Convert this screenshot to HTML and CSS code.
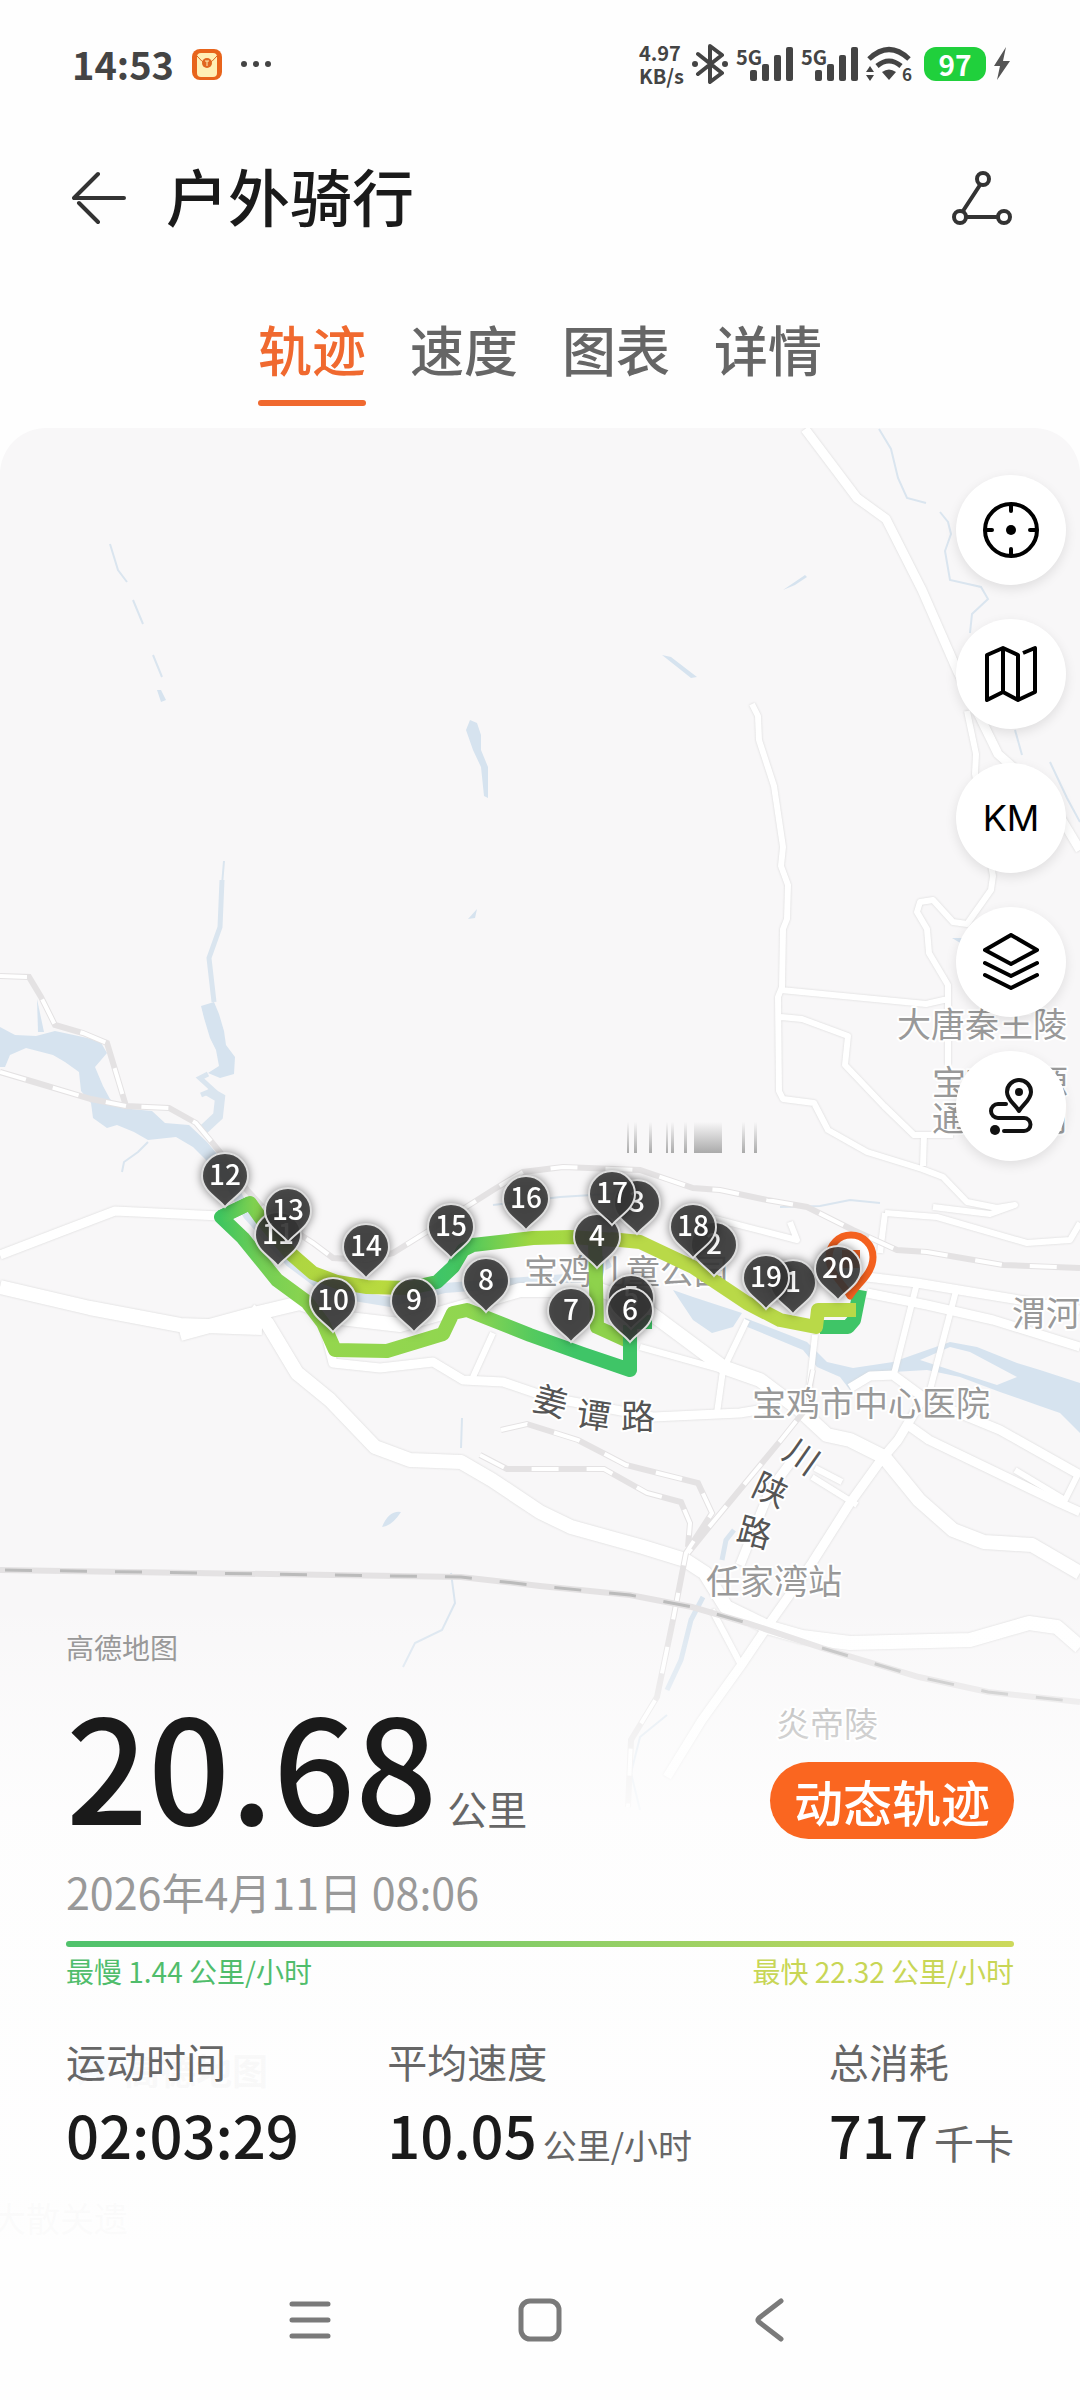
FILE: index.html
```html
<!DOCTYPE html>
<html lang="zh-CN">
<head>
  <meta charset="UTF-8">
  <meta name="viewport" content="width=device-width, initial-scale=1.0">
  <title>户外骑行</title>
  <link rel="stylesheet" href="styles.css">
</head>
<body>
  <div class="status-bar">
    <div class="status-left">
      <span class="clock">14:53</span>
      <svg class="app-icon" width="30" height="31" viewBox="0 0 30 31">
        <rect width="30" height="31" rx="8" fill="#e8641b"/>
        <rect x="5" y="4" width="20" height="24" rx="4" fill="#ffefb5"/>
        <path d="M5 7q10 14 20 0" fill="none" stroke="#d9641e" stroke-width="1"/>
        <circle cx="15" cy="14" r="5" fill="#e0661f"/>
        <path d="M13 12h4M15 12v5" stroke="#ffefb5" stroke-width="1"/>
      </svg>
      <svg width="32" height="8" viewBox="0 0 32 8" fill="#444">
        <circle cx="4" cy="4" r="3"/><circle cx="16" cy="4" r="3"/><circle cx="28" cy="4" r="3"/>
      </svg>
    </div>
    <div class="status-right">
      <span class="net-speed">4.97<br>KB/s</span>
      <svg width="36" height="40" viewBox="0 0 36 40">
        <path d="M6 10l24 19-12 9V2l12 9L6 30" fill="none" stroke="#444" stroke-width="4" stroke-linejoin="round" stroke-linecap="round"/>
        <circle cx="3" cy="20" r="3" fill="#444"/><circle cx="33" cy="20" r="3" fill="#444"/>
      </svg>
      <div class="signal">
        <span>5G</span>
        <svg width="43" height="34" viewBox="0 0 43 34" fill="#444">
          <rect y="23" width="7" height="11" rx="2"/><rect x="12" y="17" width="7" height="17" rx="2"/>
          <rect x="24" y="8" width="7" height="26" rx="2"/><rect x="36" width="7" height="34" rx="2"/>
        </svg>
      </div>
      <div class="signal">
        <span>5G</span>
        <svg width="43" height="34" viewBox="0 0 43 34" fill="#444">
          <rect y="23" width="7" height="11" rx="2"/><rect x="12" y="17" width="7" height="17" rx="2"/>
          <rect x="24" y="8" width="7" height="26" rx="2"/><rect x="36" width="7" height="34" rx="2"/>
        </svg>
      </div>
      <svg class="wifi" width="46" height="36" viewBox="0 0 46 36">
        <path d="M3 13q20-19 40 0M11 20q12-10 24 0" fill="none" stroke="#444" stroke-width="5"/>
        <path d="M16 26q7-5 14 0l-7 8zM0 26l4-6 4 6zM0 29h8l-4 6z" fill="#444"/>
        <text x="36" y="35" class="wifi-gen">6</text>
      </svg>
      <span class="battery">97</span>
      <svg width="16" height="34" viewBox="0 0 16 34">
        <path d="M12 0L0 19h6L3 33 16 14H9z" fill="#555"/>
      </svg>
    </div>
  </div>

  <header class="header">
    <button class="icon-btn" aria-label="返回">
      <svg width="54" height="54" viewBox="0 0 54 54" fill="none" stroke="#333" stroke-width="4" stroke-linecap="round" stroke-linejoin="round">
        <path d="M26 3L2 27h50M7 32l19 19"/>
      </svg>
    </button>
    <h1>户外骑行</h1>
    <button class="icon-btn share" aria-label="分享">
      <svg width="60" height="56" viewBox="0 0 60 56" fill="none" stroke="#333" stroke-width="4">
        <circle cx="31" cy="9" r="6"/><circle cx="8" cy="47" r="6"/><circle cx="52" cy="47" r="6"/>
        <path d="M28 15L11 41M14 47h32"/>
      </svg>
    </button>
  </header>

  <nav class="tabs">
    <a href="#track" class="tab active">轨迹</a>
    <a href="#speed" class="tab">速度</a>
    <a href="#chart" class="tab">图表</a>
    <a href="#detail" class="tab">详情</a>
  </nav>

  <main class="map" id="track">
    <svg class="map-canvas" viewBox="0 428 1080 1812" preserveAspectRatio="xMidYMin slice">
      <defs>
        <path id="pin" d="M0 31C-7 22-23 15-23 0a23 23 0 0 1 46 0C23 15 7 22 0 31z"/>
        <linearGradient id="leg-top" gradientUnits="userSpaceOnUse" x1="220" y1="0" x2="640" y2="0">
          <stop offset="0" stop-color="#3fc55f"/>
          <stop offset=".08" stop-color="#7fd04f"/>
          <stop offset=".18" stop-color="#aed641"/>
          <stop offset=".4" stop-color="#b9da3f"/>
          <stop offset=".48" stop-color="#6fcd50"/>
          <stop offset=".52" stop-color="#3fc567"/>
          <stop offset=".57" stop-color="#45c660"/>
          <stop offset=".74" stop-color="#9fd742"/>
          <stop offset="1" stop-color="#b4da48"/>
        </linearGradient>
        <linearGradient id="leg-bottom" gradientUnits="userSpaceOnUse" x1="220" y1="0" x2="636" y2="0">
          <stop offset="0" stop-color="#3fc55f"/>
          <stop offset=".1" stop-color="#74cf55"/>
          <stop offset=".25" stop-color="#94d64d"/>
          <stop offset=".6" stop-color="#90d650"/>
          <stop offset=".75" stop-color="#55ca5e"/>
          <stop offset=".85" stop-color="#3fc567"/>
          <stop offset="1" stop-color="#3fc567"/>
        </linearGradient>
        <linearGradient id="bars" x1="0" y1="0" x2="0" y2="1">
          <stop offset="0" stop-color="#aaa" stop-opacity="0"/>
          <stop offset="1" stop-color="#aaa"/>
        </linearGradient>
      </defs>

      <!-- Rivers and lakes -->
      <g class="water">
        <path d="M0 1027L15 1035 36 1036 55 1031 83 1037 100 1041 107 1053 95 1067 103 1086 110 1099 121 1108 152 1111 165 1123 189 1125 207 1142 222 1160 214 1168 193 1147 176 1137 148 1140 134 1132 117 1125 107 1128 93 1118 91 1103 81 1091 79 1072 65 1062 53 1055 26 1048 10 1055 5 1067 0 1067z"/>
        <path d="M37 999l7 33h-6z"/>
        <path d="M201 1006L214 1002 219 1014 224 1031 226 1045 235 1057 234 1074 220 1078 208 1073 219 1066 216 1050 210 1038 204 1018z"/>
        <path d="M470 720L477 723 481 735 481 750 488 767 488 798 484 796 481 767 473 750 466 730zM468 919l9-10-2 9zM157 690h4l5 10-5 2zM783 590l22-15 2 2-12 8zM662 655l9 2 26 20-6 1zM382 1527q10-1 19-15-12-2-19 15zM952 938h10v6z"/>
        <path d="M673 1290L693 1297 742 1313 733 1327 712 1333 693 1320z"/>
        <path fill-rule="evenodd" d="M745 1318L807 1342 827 1362 853 1368 893 1362 927 1350 950 1342 977 1347 1017 1363 1040 1370 1080 1383V1433L1060 1413 1037 1405 1000 1392 960 1377 927 1370 893 1372 867 1373 850 1390 840 1377 817 1367 803 1350 745 1326zM920 1360L960 1373 997 1385 1017 1377 970 1352 950 1347z"/>
      </g>
      <g class="stream">
        <path class="wide" d="M214 1155L248 1215 290 1262 330 1292 390 1302 445 1288 510 1283 580 1278 610 1262"/>
        <path class="mid" d="M222 880L220 927 209 958 214 1002M208 1074L200 1078 213 1090 201 1095M734 1530L726 1540 722 1560M703 1597L691 1620 681 1660 667 1690"/>
        <path class="wide" d="M208 1091L220 1098 218 1116 203 1130"/>
        <path d="M224 861L222 885M148 1142L138 1152 124 1162 122 1172M110 544L118 570 127 582M133 600L143 624M153 655L162 677M879 429L891 449 898 478 907 498 926 503M940 512L948 522 951 534 945 551 950 580 981 587 988 599 972 614 970 633M1015 730L1022 755M1050 762L1067 798 1080 822M451 1573L455 1603 442 1630 415 1643 403 1667M462 1418L461 1448M667 1715L640 1737 631 1773 640 1810M493 1205L560 1197 640 1192M780 1207L820 1206 850 1200 880 1203"/>
      </g>

      <!-- Roads -->
      <g class="roads">
        <path class="road-s" d="M967 711L976 754 975 774 993 876 991 890 967 924 953 922 933 900 920 902 917 912 927 929 929 953 948 985 948 1065M752 704L758 716 759 740 774 786 783 847 781 866 788 885 787 919 783 929 782 987 778 997 779 1091 783 1099 814 1103 828 1130 867 1152 922 1169 943 1177 967 1202 997 1208 1015 1205 990 1214 933 1207M781 990L926 1004 948 999M781 1017L802 1019 848 1036 845 1065 884 1106 914 1135 953 1135M924 1135L923 1166M493 1333L473 1377M640 1347L723 1370M747 1320L723 1370 717 1413M885 1213L880 1253M885 1213L937 1217 1027 1243 1070 1240 1080 1223M700 1215L797 1240 790 1222M917 1283L893 1378M957 1287L930 1390M712 1610L740 1663M812 1477L857 1505M815 1468L842 1482M815 1335L808 1400M1015 1470L1065 1500 1080 1470"/>
        <path class="road-m" d="M0 1255L60 1232 115 1211 220 1216M805 429L857 498 886 519 922 590 957 670 998 754 1050 800 1080 850M323 1323L333 1363 380 1368 433 1362 463 1380 503 1382 547 1397 653 1417 740 1413 770 1408M867 1277L917 1283 977 1293 1080 1310M867 1293L927 1305 993 1320 1080 1347M925 1395L898 1440 881 1460 850 1503 812 1563 767 1627 740 1667 702 1720 667 1777M893 1375L927 1400 1000 1430 1080 1475M905 1423L929 1440 1060 1503 1080 1512M800 1450L770 1490 740 1565M850 1388L870 1376 895 1375"/>
        <path class="road-l" d="M0 1287L90 1308 180 1325 262 1328M180 1334L250 1315 300 1303 340 1318 400 1325 470 1305 520 1290 600 1290 637 1303 723 1367 760 1380 800 1410 827 1435 850 1440 884 1457 919 1500 953 1530 984 1542 1032 1545 1080 1573M250 1310L267 1323 297 1373 330 1400 375 1447 410 1460 461 1462 492 1480 540 1512 571 1527 643 1547 685 1560 705 1573 726 1607 767 1627 802 1637 850 1643 970 1640 1029 1623 1057 1627 1080 1647"/>
      </g>

      <!-- Railways -->
      <g class="rail">
        <path id="rail-lines" d="M0 976L29 977 41 997 55 1025 83 1033 107 1043 126 1106 169 1108 196 1123 220 1152 247 1190 270 1215 313 1243 333 1258 367 1260 393 1253 430 1230 493 1190 523 1172 563 1167 640 1170 693 1188 720 1190 767 1200 807 1207 853 1230 897 1250 927 1252 1003 1265 1080 1268M0 1072L34 1082 91 1099 126 1106M501 1430L527 1424 578 1440 626 1465 698 1483 712 1513 686 1553 673 1620 657 1697 631 1740 628 1807M480 1455L507 1469 604 1469 647 1493 681 1502 690 1523 688 1547M813 1370L805 1410 781 1440 709 1527 688 1553"/>
        <use href="#rail-lines" class="rail-dash"/>
        <path d="M0 1570L461 1577 540 1586 630 1595 692 1607 747 1623 822 1648 919 1677 988 1692 1080 1702"/>
        <path class="main-dash" d="M5 1570L461 1577 540 1586 630 1595 692 1607 747 1623M822 1648L919 1677 988 1692 1080 1702"/>
      </g>

      <g class="place">
        <text x="897" y="1037">大唐秦王陵</text>
        <text x="932" y="1095">宝鸡能源</text>
        <text x="932" y="1131">通达公司</text>
        <text x="524" y="1284">宝鸡儿童公园</text>
        <text x="1012" y="1326">渭河</text>
        <text x="752" y="1416">宝鸡市中心医院</text>
        <text x="706" y="1594">任家湾站</text>
        <text x="776" y="1737">炎帝陵</text>
        <text x="-8" y="2232">大散关遗</text>
        <text x="124" y="2085" class="watermark">高德地图</text>
        <text class="street" x="531 575 621" y="1409 1425 1429" rotate="15 8 0">姜谭路</text>
        <text class="street" x="781 750 735" y="1457 1494 1540" rotate="35 25 15">川陕路</text>
      </g>
      <path d="M72 2058h40l-10 24-12-6-10 10z" fill="#5aa0f0"/>

      <g fill="url(#bars)">
        <rect x="627" y="1122" width="2" height="31"/><rect x="634" y="1122" width="3" height="31"/>
        <rect x="649" y="1122" width="3" height="31"/><rect x="666" y="1122" width="2" height="31"/>
        <rect x="671" y="1122" width="3" height="31"/><rect x="684" y="1122" width="3" height="31"/>
        <rect x="694" y="1122" width="28" height="31"/><rect x="742" y="1122" width="3" height="31"/>
        <rect x="754" y="1122" width="3" height="31"/>
      </g>

      <!-- Ride track, coloured by speed -->
      <g class="track">
        <path stroke="#8ed24c" d="M595 1240L597 1327 630 1342"/>
        <path stroke="url(#leg-bottom)" d="M250 1203L221 1217 243 1238 277 1280 307 1302 323 1323 335 1350 387 1351 443 1334 453 1313 467 1310 530 1335 583 1354 630 1370 630 1325"/>
        <path stroke="#3fc567" d="M636 1322L652 1322"/>
        <path stroke="url(#leg-top)" d="M221 1217L250 1203 260 1217 290 1253 313 1273 337 1282 367 1287 410 1288 437 1282 453 1267 463 1250 473 1245 533 1238 570 1237 616 1240"/>
        <path stroke="#3fc567" d="M860 1290L854 1320 848 1327 820 1327"/>
        <path stroke="#b9d948" d="M610 1239L640 1242 693 1267 747 1303 780 1320 816 1327 818 1310 856 1310"/>
      </g>

      <!-- Start marker -->
      <path d="M850 1296C844 1284 829 1274 829 1257a22 22 0 0 1 44 0C873 1274 857 1284 850 1296z" fill="#fff" stroke="#f4611f" stroke-width="7" stroke-linejoin="round"/>
      <rect x="842" y="1250" width="18" height="18" fill="#f4611f"/>

      <!-- Kilometre markers -->
      <g class="pins">
        <g transform="translate(793 1283)"><use href="#pin"/><text y="9">1</text></g>
        <g transform="translate(714 1245)"><use href="#pin"/><text y="9">2</text></g>
        <g transform="translate(637 1203)"><use href="#pin"/><text y="9">3</text></g>
        <g transform="translate(597 1237)"><use href="#pin"/><text y="9">4</text></g>
        <g transform="translate(631 1298)"><use href="#pin"/><text y="9">5</text></g>
        <g transform="translate(630 1311)"><use href="#pin"/><text y="9">6</text></g>
        <g transform="translate(571 1311)"><use href="#pin"/><text y="9">7</text></g>
        <g transform="translate(486 1281)"><use href="#pin"/><text y="9">8</text></g>
        <g transform="translate(414 1301)"><use href="#pin"/><text y="9">9</text></g>
        <g transform="translate(333 1301)"><use href="#pin"/><text y="9">10</text></g>
        <g transform="translate(278 1235)"><use href="#pin"/><text y="9">11</text></g>
        <g transform="translate(225 1176)"><use href="#pin"/><text y="9">12</text></g>
        <g transform="translate(288 1211)"><use href="#pin"/><text y="9">13</text></g>
        <g transform="translate(366 1247)"><use href="#pin"/><text y="9">14</text></g>
        <g transform="translate(451 1227)"><use href="#pin"/><text y="9">15</text></g>
        <g transform="translate(526 1199)"><use href="#pin"/><text y="9">16</text></g>
        <g transform="translate(612 1194)"><use href="#pin"/><text y="9">17</text></g>
        <g transform="translate(693 1227)"><use href="#pin"/><text y="9">18</text></g>
        <g transform="translate(766 1278)"><use href="#pin"/><text y="9">19</text></g>
        <g transform="translate(838 1269)"><use href="#pin"/><text y="9">20</text></g>
      </g>
    </svg>

    <div class="map-tools">
      <button aria-label="定位">
        <svg width="56" height="56" viewBox="0 0 56 56" fill="none" stroke="#000" stroke-width="4" stroke-linecap="round">
          <circle cx="28" cy="28" r="26"/>
          <path d="M28 3v6M28 47v6M3 28h6M47 28h6"/>
          <circle cx="28" cy="28" r="5" fill="#000" stroke="none"/>
        </svg>
      </button>
      <button aria-label="地图类型">
        <svg width="56" height="58" viewBox="0 0 56 58" fill="none" stroke="#000" stroke-width="4" stroke-linejoin="round">
          <path d="M40 8l12-5v44l-17 8-15-8-16 8V10l16-7 15 7v45M20 3v44"/>
        </svg>
      </button>
      <button class="km">KM</button>
      <button aria-label="图层">
        <svg width="56" height="58" viewBox="0 0 56 58" fill="none" stroke="#000" stroke-width="4" stroke-linecap="round" stroke-linejoin="round">
          <path d="M28 2l26 15-26 14L2 17zM2 30l26 13 26-13M2 42l26 13 26-13"/>
        </svg>
      </button>
      <button aria-label="路线">
        <svg width="56" height="60" viewBox="0 0 56 60" fill="none" stroke="#111" stroke-width="4" stroke-linecap="round" stroke-linejoin="round">
          <path d="M36 35C32 28 24 24 24 16a12 12 0 0 1 24 0C48 24 40 28 36 35z"/>
          <path d="M23 28h-8a7 7 0 0 0 0 14h26a6 6 0 0 1 0 13H21"/>
          <circle cx="36" cy="16" r="4" fill="#111" stroke="none"/><circle cx="12" cy="54" r="5" fill="#111" stroke="none"/>
        </svg>
      </button>
    </div>

    <section class="summary">
      <p class="provider">高德地图</p>
      <div class="distance-row">
        <p class="distance">20.68 <span>公里</span></p>
        <button class="replay">动态轨迹</button>
      </div>
      <p class="date">2026年4月11日 08:06</p>
      <div class="speed-bar"></div>
      <div class="speed-range">
        <span class="slow">最慢 1.44 公里/小时</span>
        <span class="fast">最快 22.32 公里/小时</span>
      </div>
      <dl class="stats">
        <div>
          <dt>运动时间</dt>
          <dd>02:03:29</dd>
        </div>
        <div>
          <dt>平均速度</dt>
          <dd>10.05<span class="unit">公里/小时</span></dd>
        </div>
        <div>
          <dt>总消耗</dt>
          <dd>717<span class="unit kcal">千卡</span></dd>
        </div>
      </dl>
    </section>
  </main>

  <footer class="system-nav">
    <button aria-label="最近任务">
      <svg width="44" height="44" viewBox="0 0 44 44" stroke="#7a7a7a" stroke-width="5" stroke-linecap="round">
        <path d="M4 6h36M4 22h36M4 38h36"/>
      </svg>
    </button>
    <button aria-label="主屏幕">
      <svg width="44" height="44" viewBox="0 0 44 44" fill="none" stroke="#7a7a7a" stroke-width="5">
        <rect x="3" y="3" width="38" height="38" rx="9"/>
      </svg>
    </button>
    <button aria-label="返回上一页">
      <svg width="44" height="44" viewBox="0 0 44 44" fill="none" stroke="#7a7a7a" stroke-width="5" stroke-linecap="round" stroke-linejoin="round">
        <path d="M33 3L11 20q-2 2 0 4l22 17"/>
      </svg>
    </button>
  </footer>
</body>
</html>
```

FILE: styles.css
```css
* {
  box-sizing: border-box;
}

body {
  margin: 0;
  min-height: 100vh;
  display: flex;
  flex-direction: column;
  background: #fefefe;
  color: #1a1a1a;
  font-family: 'Noto Sans CJK SC', 'Noto Sans', sans-serif;
  font-weight: 500;
}

button {
  padding: 0;
  border: none;
  background: none;
  color: inherit;
  font: inherit;
  cursor: pointer;
}

svg {
  display: block;
}

h1,
p,
dl,
dd {
  margin: 0;
}

/* Status bar */
.status-bar {
  display: flex;
  justify-content: space-between;
  align-items: center;
  height: 128px;
  padding: 0 70px 0 72px;
  color: #444;
}

.status-left,
.status-right {
  display: flex;
  align-items: center;
}

.status-left {
  gap: 18px;
}

.status-right {
  gap: 8px;
}

.clock {
  font-size: 38px;
  line-height: 48px;
  font-weight: 700;
}

.net-speed {
  font-size: 20px;
  line-height: 23px;
  font-weight: 700;
}

.signal {
  display: flex;
  align-items: flex-end;
}

.signal span {
  align-self: flex-start;
  width: 14px;
  font-size: 20px;
  line-height: 20px;
  font-weight: 700;
}

.wifi {
  overflow: visible;
}

.wifi-gen {
  font-size: 17px;
  font-weight: 700;
  fill: #444;
}

.battery {
  width: 62px;
  margin-left: 4px;
  border-radius: 12px;
  background: #20d03c;
  color: #fff;
  font-size: 28px;
  line-height: 34px;
  font-weight: 700;
  text-align: center;
}

/* Header */
.header {
  display: flex;
  align-items: center;
  gap: 40px;
  height: 140px;
  padding: 0 68px 0 72px;
}

.header h1 {
  padding-bottom: 6px;
  font-size: 62px;
  line-height: 72px;
  font-weight: 500;
}

.share {
  margin-left: auto;
}

/* Tabs */
.tabs {
  display: flex;
  justify-content: center;
  gap: 44px;
  height: 160px;
  padding-top: 44px;
}

.tab {
  height: 94px;
  color: #666;
  font-size: 54px;
  line-height: 74px;
  text-decoration: none;
}

.tab.active {
  position: relative;
  color: #f0692f;
}

.tab.active::after {
  content: '';
  position: absolute;
  left: 0;
  right: 0;
  bottom: 0;
  height: 6px;
  border-radius: 3px;
  background: #f0692f;
}

/* Map */
.map {
  position: relative;
  flex: 1;
  display: flex;
  flex-direction: column;
  justify-content: space-between;
  border-radius: 46px 46px 0 0;
  background: #f8f7f8;
  overflow: hidden;
}

.map-canvas {
  position: absolute;
  top: 0;
  left: 0;
  width: 100%;
  height: 100%;
}

.water {
  fill: #d6e3ef;
}

.stream path {
  fill: none;
  stroke: #dae5ef;
  stroke-width: 2;
}

.stream .mid {
  stroke-width: 5;
}

.stream .wide {
  stroke-width: 10;
}

.roads {
  fill: none;
  stroke: #fff;
  stroke-linejoin: round;
  filter: drop-shadow(0 0 1px #d4d4d4);
}

.road-s {
  stroke-width: 6;
}

.road-m {
  stroke-width: 9;
}

.road-l {
  stroke-width: 14;
}

.rail {
  fill: none;
  stroke: #e4e2e3;
  stroke-width: 6;
}

.rail-dash {
  stroke: #fff;
  stroke-width: 4;
  stroke-dasharray: 27 28;
}

.main-dash {
  stroke: #bbb;
  stroke-width: 3;
  stroke-dasharray: 27 28;
}

.place text {
  fill: #999;
  stroke: #fff;
  stroke-width: 4px;
  stroke-linejoin: round;
  paint-order: stroke;
  font-size: 34px;
  font-weight: 400;
}

.place .street {
  fill: #555;
}

.place .watermark {
  fill: #777;
  font-size: 36px;
  font-weight: 700;
}

.track path {
  fill: none;
  stroke-width: 14;
  stroke-linejoin: round;
}

.pins g {
  filter: drop-shadow(0 0 4px rgba(0, 0, 0, 0.5));
}

.pins use {
  fill: rgba(55, 55, 55, 0.86);
  stroke: #ddd;
  stroke-width: 2;
}

.pins text {
  fill: #fff;
  font-size: 28px;
  text-anchor: middle;
}

/* Map buttons */
.map-tools {
  position: relative;
  display: flex;
  flex-direction: column;
  align-items: flex-end;
  gap: 34px;
  padding: 47px 14px 0;
}

.map-tools button {
  display: flex;
  justify-content: center;
  align-items: center;
  width: 110px;
  height: 110px;
  border-radius: 50%;
  background: #fff;
  box-shadow: 0 4px 12px rgba(0, 0, 0, 0.1);
}

.map-tools .km {
  color: #000;
  font-family: Inter, sans-serif;
  font-size: 36px;
  font-weight: 400;
}

/* Summary */
.summary {
  position: relative;
  padding: 30px 66px 64px;
  background: linear-gradient(rgba(254, 254, 254, 0), rgba(254, 254, 254, 0.5) 120px, rgba(254, 254, 254, 0.88) 220px, rgba(254, 254, 254, 0.95) 320px, rgba(254, 254, 254, 0.97));
}

.provider {
  color: #999;
  font-size: 28px;
  line-height: 32px;
  font-weight: 400;
}

.distance-row {
  display: flex;
  justify-content: space-between;
  align-items: flex-end;
  margin-top: 22px;
}

.distance {
  display: flex;
  align-items: baseline;
  gap: 10px;
  font-size: 144px;
  line-height: 154px;
}

.distance span {
  color: #666;
  font-size: 40px;
  line-height: 40px;
  font-weight: 400;
}

.replay {
  padding: 0 24px;
  border-radius: 40px;
  background: #fa6620;
  color: #fff;
  font-size: 49px;
  line-height: 77px;
}

.date {
  margin-top: 28px;
  color: #999;
  font-size: 43px;
  line-height: 48px;
  font-weight: 400;
}

.speed-bar {
  height: 6px;
  margin-top: 26px;
  border-radius: 3px;
  background: linear-gradient(to right, #50c26c, #5cc46c 20%, #90cf66 55%, #cdd95c);
}

.speed-range {
  display: flex;
  justify-content: space-between;
  margin-top: 8px;
  font-size: 28px;
  line-height: 32px;
  font-weight: 400;
}

.slow {
  color: #50bd6c;
}

.fast {
  color: #c8d656;
}

.stats {
  display: grid;
  grid-template-columns: 8fr 11fr auto;
  margin-top: 50px;
}

.stats dt {
  color: #666;
  font-size: 40px;
  line-height: 48px;
  font-weight: 400;
}

.stats dd {
  display: flex;
  align-items: baseline;
  gap: 6px;
  margin-top: 18px;
  font-size: 58px;
  line-height: 62px;
}

.unit {
  color: #666;
  font-size: 34px;
  font-weight: 400;
}

.kcal {
  font-size: 40px;
}

/* System navigation */
.system-nav {
  display: flex;
  justify-content: space-around;
  align-items: center;
  height: 160px;
  padding: 0 18%;
}
```
